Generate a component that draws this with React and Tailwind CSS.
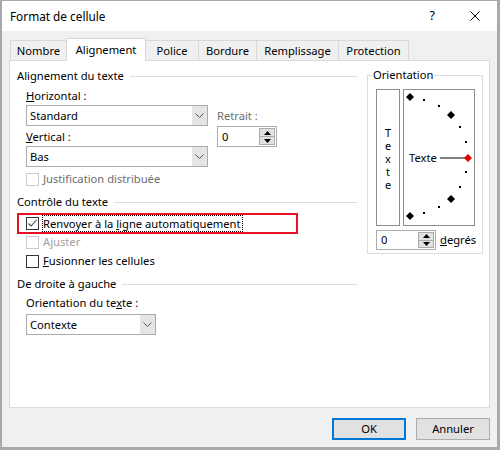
import React from "react";

const Chevron = () => (
  <svg width="9" height="5" viewBox="0 0 9 5">
    <path d="M0.5 0.5 L4.5 4.5 L8.5 0.5" fill="none" stroke="#555555" strokeWidth="1" />
  </svg>
);

function Select({ value, width }) {
  return (
    <div className={`flex h-[21px] border border-[#acacac] bg-white ${width}`}>
      <div className="flex-1 pl-[3px] flex items-center">{value}</div>
      <div className="w-[15px] bg-[#e5e5e5] flex items-center justify-center">
        <Chevron />
      </div>
    </div>
  );
}

function Spin({ width, height }) {
  return (
    <div className={`flex border border-[#acacac] bg-white ${width} ${height}`}>
      <div className="flex-1 pl-[4px] flex items-center">0</div>
      <div className="w-[16px] my-[1px] mr-[1px] flex flex-col border border-[#acacac]">
        <div className="flex-1 bg-[#e1e1e1] flex items-center justify-center border-b border-[#acacac]">
          <svg width="7" height="4" viewBox="0 0 7 4">
            <path d="M3.5 0 L7 4 L0 4 Z" fill="#000000" />
          </svg>
        </div>
        <div className="flex-1 bg-[#e1e1e1] flex items-center justify-center">
          <svg width="7" height="4" viewBox="0 0 7 4">
            <path d="M0 0 L7 0 L3.5 4 Z" fill="#000000" />
          </svg>
        </div>
      </div>
    </div>
  );
}

function Checkbox({ checked, disabled }) {
  return (
    <div
      className={`w-[13px] h-[13px] shrink-0 border bg-white flex items-center justify-center ${
        disabled ? "border-[#cccccc]" : "border-[#333333]"
      }`}
    >
      {checked && (
        <svg width="11" height="11" viewBox="0 0 11 11">
          <path d="M1.5 5.5 L4 8 L9.5 2" fill="none" stroke="#444444" strokeWidth="1.1" />
        </svg>
      )}
    </div>
  );
}

function Header({ children, className = "" }) {
  return (
    <div className={`flex items-center h-[16px] ${className}`}>
      <span className="whitespace-nowrap">{children}</span>
      <div className="flex-1 h-px bg-[#dcdcdc] ml-[6px]" />
    </div>
  );
}

function Dial() {
  const diamonds = [
    [6, 7],
    [47, 25],
    [47, 109],
    [6, 126],
  ];
  const dots = [
    [20, 10],
    [35, 16],
    [56, 37],
    [62, 52],
    [62, 82],
    [56, 97],
    [35, 117],
    [20, 123],
  ];
  const dia = (x, y, fill, k) => (
    <path key={k} d={`M${x} ${y - 4} L${x + 4} ${y} L${x} ${y + 4} L${x - 4} ${y} Z`} fill={fill} />
  );
  return (
    <svg width="70" height="135" viewBox="0 0 70 135">
      {diamonds.map(([x, y], i) => dia(x, y, "#000000", i))}
      {dots.map(([x, y], i) => (
        <rect key={"d" + i} x={x - 1} y={y - 1} width="2" height="2" fill="#000000" />
      ))}
      <line x1="36" y1="68" x2="62" y2="68" stroke="#000000" strokeWidth="1" />
      {dia(64, 68, "#e00000", "red")}
      <text x="5" y="72" fontSize="11.2" fontFamily="Noto Sans, sans-serif" fill="#000000">
        Texte
      </text>
    </svg>
  );
}

export default function App() {
  return (
    <div className="w-[500px] h-[450px] bg-[#f0f0f0] border-t border-l-2 border-r-[3px] border-b-[3px] border-[#a9a9a9] flex flex-col text-[11.2px] leading-[16px] text-black font-['Segoe_UI','Noto_Sans',sans-serif]">
      {/* Title bar */}
      <div className="h-[30px] shrink-0 bg-white flex items-center justify-between pl-[8px] pr-[17px]">
        <span className="text-[11.8px]">Format de cellule</span>
        <div className="flex items-center gap-[35px]">
          <span className="text-[12.5px]">?</span>
          <svg width="10" height="10" viewBox="0 0 10 10">
            <path d="M0.5 0.5 L9.5 9.5 M9.5 0.5 L0.5 9.5" stroke="#000000" strokeWidth="1" />
          </svg>
        </div>
      </div>

      {/* Body */}
      <div className="flex flex-col px-[7px] pt-[7px]">
        {/* Tabs */}
        <div className="flex items-start h-[22px] pl-[1px]">
          <div className="mt-[2px] h-[20px] w-[56px] border-l border-t border-[#d9d9d9] flex items-center justify-center pt-px">
            Nombre
          </div>
          <div className="relative z-10 h-[23px] w-[80px] bg-white border-l border-r border-t border-[#d9d9d9] flex items-center justify-center">
            Alignement
          </div>
          <div className="mt-[2px] h-[20px] w-[52px] border-t border-[#d9d9d9] flex items-center justify-center pt-px">
            Police
          </div>
          <div className="mt-[2px] h-[20px] w-[58px] border-l border-t border-[#d9d9d9] flex items-center justify-center pt-px">
            Bordure
          </div>
          <div className="mt-[2px] h-[20px] w-[82px] border-l border-t border-[#d9d9d9] flex items-center justify-center pt-px">
            Remplissage
          </div>
          <div className="mt-[2px] h-[20px] w-[71px] border-l border-t border-r border-[#d9d9d9] flex items-center justify-center pt-px">
            Protection
          </div>
        </div>

        {/* Panel */}
        <div className="h-[348px] border border-[#d9d9d9] bg-white flex pl-[7px]">
          {/* Left column */}
          <div className="w-[340px] flex flex-col pt-[7px]">
            <Header>Alignement du texte</Header>
            <div className="pl-[9px] flex flex-col">
              <div className="mt-[4px] h-[16px]">
                <span className="underline">H</span>orizontal :
              </div>
              <div className="flex">
                <div className="flex flex-col">
                  <div className="mt-[1px]">
                    <Select value="Standard" width="w-[182px]" />
                  </div>
                  <div className="mt-[3px] h-[16px]">
                    <span className="underline">V</span>ertical :
                  </div>
                  <div className="mt-[1px]">
                    <Select value="Bas" width="w-[182px]" />
                  </div>
                </div>
                <div className="ml-[9px] flex flex-col">
                  <div className="mt-[4px] h-[16px] text-[#6d6d6d]">Retrait :</div>
                  <div className="mt-[2px]">
                    <Spin width="w-[60px]" height="h-[21px]" />
                  </div>
                </div>
              </div>
              <div className="mt-[4px] h-[16px] flex items-center gap-[4px] text-[#6d6d6d]">
                <Checkbox disabled />
                <span>Justification distribuée</span>
              </div>
            </div>

            <Header className="mt-[7px]">Contrôle du texte</Header>
            <div className="mt-[3px] w-[281px] h-[21px] border-2 border-[#e81123] flex items-center pl-[7px]">
              <Checkbox checked />
              <span className="ml-[3px] h-[17px] border border-dotted border-black flex items-center pr-px">
                <span>
                  Renvoyer à la <span className="underline">l</span>igne automatiquement
                </span>
              </span>
            </div>
            <div className="pl-[9px] flex flex-col">
              <div className="h-[16px] flex items-center gap-[4px] text-[#a0a0a0]">
                <Checkbox disabled />
                <span>Ajuster</span>
              </div>
              <div className="mt-[3px] h-[16px] flex items-center gap-[4px]">
                <Checkbox />
                <span>
                  <span className="underline">F</span>usionner les cellules
                </span>
              </div>
            </div>

            <Header className="mt-[7px]">De droite à gauche</Header>
            <div className="pl-[9px] flex flex-col">
              <div className="mt-[3px] h-[16px]">
                Orientation du te<span className="underline">x</span>te :
              </div>
              <div className="mt-[3px]">
                <Select value="Contexte" width="w-[130px]" />
              </div>
            </div>
          </div>

          {/* Orientation group */}
          <div className="ml-[10px] mt-[14px] self-start relative w-[116px] border border-[#dcdcdc] pt-[13px] pl-[8px] pb-[3px]">
            <div className="absolute left-[4px] top-[-9px] bg-white px-[1px] leading-[16px]">Orientation</div>
            <div className="flex gap-[3px]">
              <div className="w-[24px] h-[137px] border border-[#8c8c8c] flex items-center justify-center pt-[2px]">
                <div className="text-center text-[11px] leading-[13px]">
                  T<br />e<br />x<br />t<br />e
                </div>
              </div>
              <div className="w-[72px] h-[137px] border border-[#8c8c8c]">
                <Dial />
              </div>
            </div>
            <div className="mt-[4px] flex items-center">
              <Spin width="w-[60px]" height="h-[20px]" />
              <span className="ml-[4px]">
                <span className="underline">d</span>egrés
              </span>
            </div>
          </div>
        </div>

        {/* Buttons */}
        <div className="mt-[10px] flex justify-end gap-[10px]">
          <div className="w-[74px] h-[22px] border-2 border-[#0078d7] bg-[#e1e1e1] flex items-center justify-center">
            OK
          </div>
          <div className="w-[74px] h-[22px] border border-[#adadad] bg-[#e1e1e1] flex items-center justify-center">
            Annuler
          </div>
        </div>
      </div>
    </div>
  );
}
